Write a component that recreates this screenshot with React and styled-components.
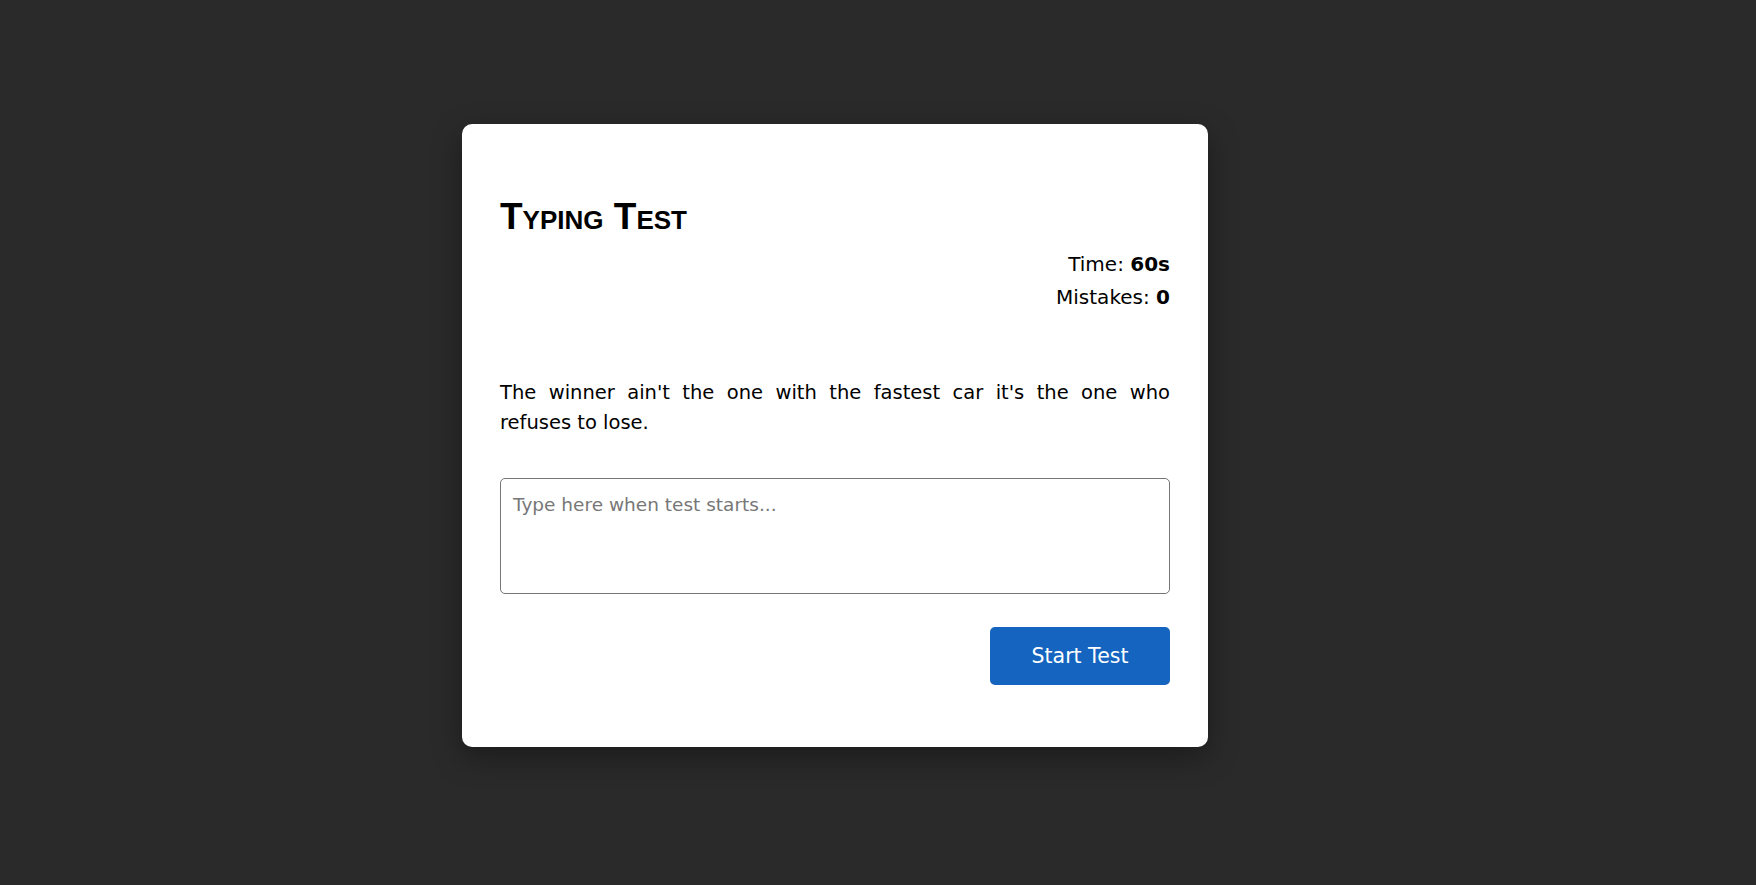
import { useState } from 'react';
import styled, { createGlobalStyle } from 'styled-components';

const GlobalStyle = createGlobalStyle`
  * {
    box-sizing: border-box;
  }
  body {
    margin: 0;
    background-color: #2a2a2a;
    font-family: 'DejaVu Sans', 'Noto Sans', sans-serif;
  }
`;

const Page = styled.div`
  display: flex;
  justify-content: center;
  align-items: center;
  min-height: 100vh;
  padding: 0 86px 15px 0;
`;
const Card = styled.div`
  width: 746px;
  padding: 75px 38px 62px;
  background-color: #ffffff;
  border-radius: 10px;
  box-shadow: 0 10px 30px rgba(0, 0, 0, 0.35);
`;
const Title = styled.h1`
  margin: 0;
  font-family: 'Liberation Sans', Arial, sans-serif;
  font-size: 37px;
  font-weight: 700;
  font-variant: small-caps;
  line-height: 36px;
  color: #000;
`;
const Stats = styled.div`
  margin-top: 13px;
  text-align: right;
  font-size: 20px;
  line-height: 33px;
  color: #000;
`;
const Value = styled.b`
  font-weight: 700;
`;
const Quote = styled.p`
  margin: 64px 0 0;
  font-size: 19.5px;
  line-height: 30px;
  text-align: justify;
  color: #000;
`;
const TypeArea = styled.textarea`
  display: block;
  width: 100%;
  height: 116px;
  margin-top: 40px;
  padding: 12px 12px;
  font-family: inherit;
  font-size: 18.5px;
  line-height: 28px;
  color: #000;
  border: 1px solid #777;
  border-radius: 5px;
  resize: none;
  outline: none;
  &::placeholder {
    color: #777;
  }
`;
const Actions = styled.div`
  display: flex;
  justify-content: flex-end;
  margin-top: 33px;
`;
const StartButton = styled.button`
  width: 180px;
  height: 58px;
  font-family: inherit;
  font-size: 20.5px;
  color: #ffffff;
  background-color: #1565c0;
  border: none;
  border-radius: 5px;
  cursor: pointer;
  &:hover {
    background-color: #1e75d6;
  }
`;

const quote = "The winner ain't the one with the fastest car it's the one who refuses to lose.";

const App = () => {
  const [text, setText] = useState('');

  return (
    <Page>
      <GlobalStyle />
      <Card>
        <Title>Typing Test</Title>
        <Stats>
          <div>
            Time: <Value>60s</Value>
          </div>
          <div>
            Mistakes: <Value>0</Value>
          </div>
        </Stats>
        <Quote>{quote}</Quote>
        <TypeArea
          value={text}
          onChange={(e) => setText(e.target.value)}
          placeholder="Type here when test starts..."
        />
        <Actions>
          <StartButton>Start Test</StartButton>
        </Actions>
      </Card>
    </Page>
  );
};

export default App;
